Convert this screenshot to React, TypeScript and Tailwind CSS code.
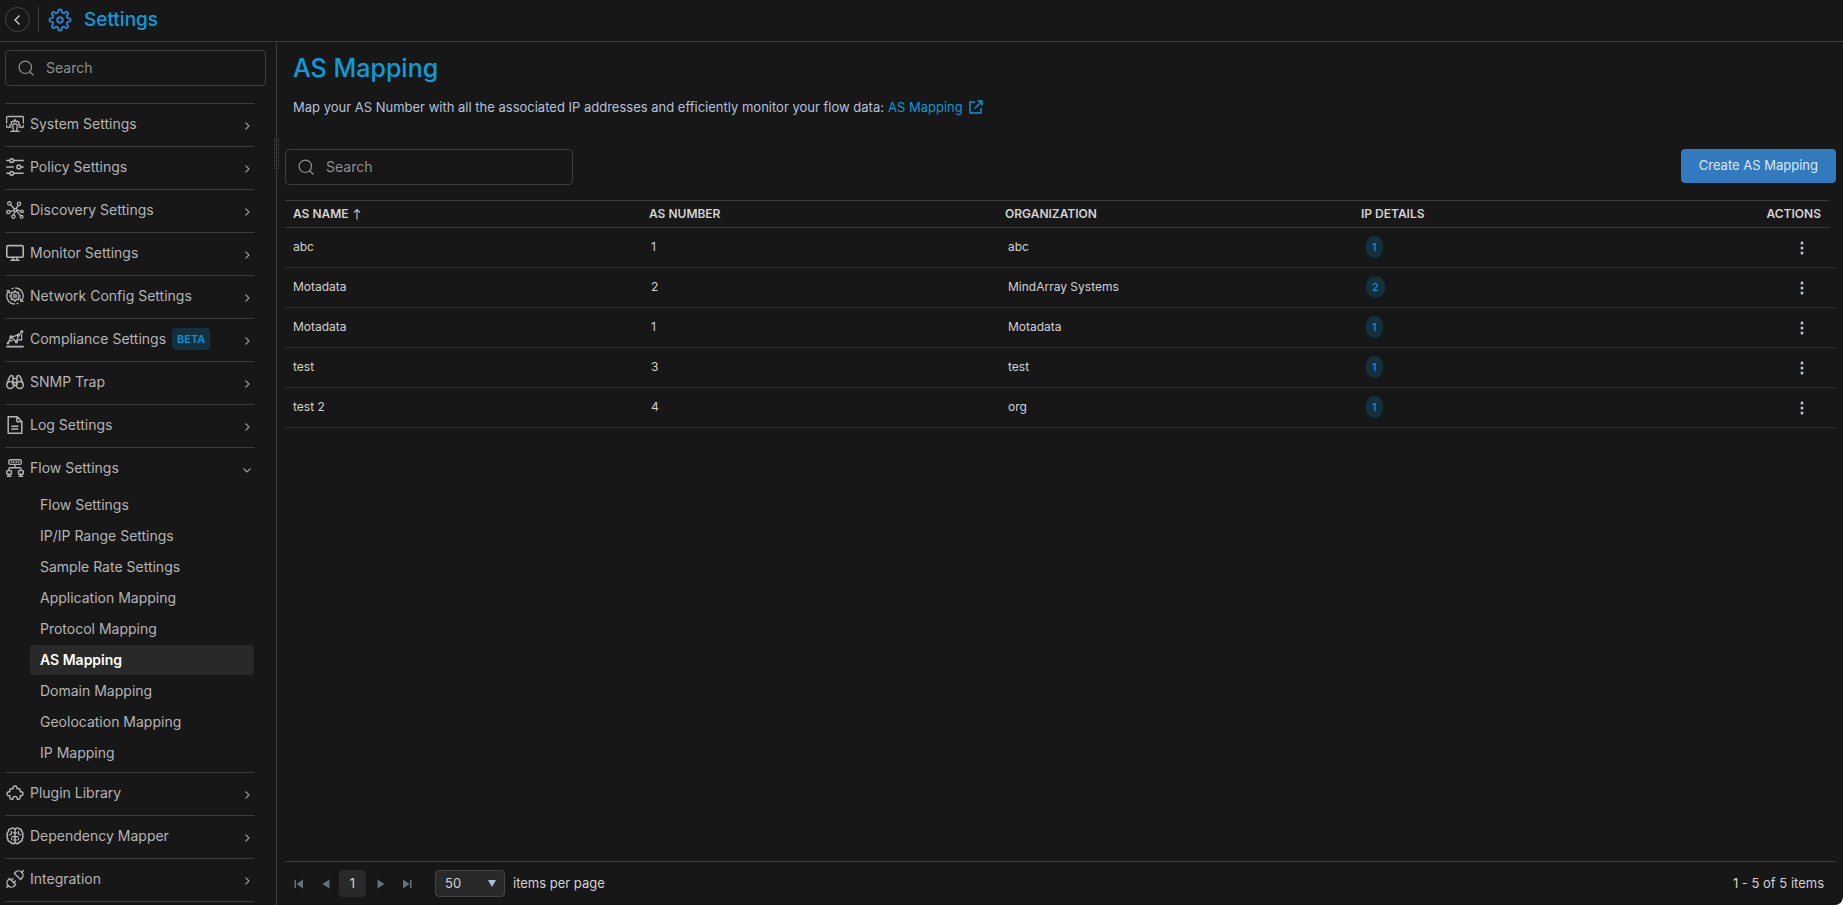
import { useState } from "react";
import type { ReactNode } from "react";

type Mapping = { id: number; name: string; asNumber: number; organization: string; ips: number };

const MAPPINGS: Mapping[] = [
    { id: 1, name: "abc", asNumber: 1, organization: "abc", ips: 1 },
    { id: 2, name: "Motadata", asNumber: 2, organization: "MindArray Systems", ips: 2 },
    { id: 3, name: "Motadata", asNumber: 1, organization: "Motadata", ips: 1 },
    { id: 4, name: "test", asNumber: 3, organization: "test", ips: 1 },
    { id: 5, name: "test 2", asNumber: 4, organization: "org", ips: 1 },
];

const FLOW_ITEMS: string[] = [
    "Flow Settings",
    "IP/IP Range Settings",
    "Sample Rate Settings",
    "Application Mapping",
    "Protocol Mapping",
    "AS Mapping",
    "Domain Mapping",
    "Geolocation Mapping",
    "IP Mapping",
];

// rounded gear outline, one lobe per tooth
const gearPath = (c: number, outer: number, inner: number, teeth: number) => {
    const step = (Math.PI * 2) / teeth;
    const at = (r: number, a: number) => `${(c + r * Math.cos(a)).toFixed(2)} ${(c + r * Math.sin(a)).toFixed(2)}`;
    let d = "";
    for (let i = 0; i < teeth; i++) {
        const a = i * step - Math.PI / 2;
        d += `${i === 0 ? "M" : "L"}${at(outer, a - step * 0.17)}Q${at(outer * 1.04, a)} ${at(outer, a + step * 0.17)}`;
        d += `L${at(inner * 1.04, a + step * 0.3)}Q${at(inner * 0.94, a + step * 0.5)} ${at(inner * 1.04, a + step * 0.7)}`;
    }
    return d + "Z";
};

const Icon = ({ children, width = 1.3 }: { children: ReactNode; width?: number }) => (
    <svg
        viewBox="0 0 18 18"
        className="size-[18px] shrink-0"
        fill="none"
        stroke="currentColor"
        strokeWidth={width}
        strokeLinecap="round"
        strokeLinejoin="round"
        aria-hidden="true"
    >
        {children}
    </svg>
);

const SystemIcon = () => (
    <Icon>
        <path d="M2.8 12.4H1.6a1 1 0 0 1-1-1v-1M.6 8V2.5a1 1 0 0 1 1-1h14.8a1 1 0 0 1 1 1V8M17.4 10.4v1a1 1 0 0 1-1 1h-1.2" />
        <path d="M5.2 12.2H3.8v-2l1.4-.5.3-.8-.6-1.3 1.4-1.4 1.3.6.6-.3.3-1.5h1l.3 1.5.6.3 1.3-.6 1.4 1.4-.6 1.3.3.8 1.4.5v2h-1.400" />
        <path d="M6.800 12V10.800a2.200 2.200 0 0 1 4.400 0V12M7.200 13v3.200h3.600V13M4.800 16.400h8.400" />
    </Icon>
);

const PolicyIcon = () => (
    <Icon width={1.5}>
        <path d="M.8 2.6h2.4M8.2 2.6h9M.8 9h6.400M15.4 9h1.8M.8 15.3h2.4M8.2 15.3h9" />
        <circle cx="5.7" cy="2.6" r="1.900" />
        <circle cx="12.8" cy="9" r="1.900" />
        <circle cx="5.7" cy="15.3" r="1.900" />
    </Icon>
);

const DiscoveryIcon = () => (
    <Icon>
        <circle cx="3.4" cy="2.4" r="1.7" />
        <circle cx="13" cy="2.8" r="1.7" />
        <circle cx="2.4" cy="11" r="1.7" />
        <circle cx="7.4" cy="15.6" r="1.7" />
        <circle cx="16" cy="10.4" r="1.3" />
        <circle cx="15.6" cy="15.8" r="1.4" />
        <circle cx="9.4" cy="9" r="1.5" />
        <path d="M4.6 3.7l3.6 4M12.2 4.4l-2 3.2M4.2 10.6l3.5-1M8.8 10.7l-1 3.2M11.2 9.2l3.4.9M10.7 10.2l3.9 4.6" />
    </Icon>
);

const MonitorIcon = () => (
    <Icon width={1.6}>
        <rect x=".8" y="1.600" width="16.4" height="11.6" rx="1.2" />
        <path d="M7 13.4v2.6M11 13.4v2.6M5 16.2h8" />
    </Icon>
);

const NetworkIcon = () => (
    <Icon>
        <path d={gearPath(9, 4.9, 3.6, 8)} />
        <circle cx="9" cy="9" r="1.4" />
        <path d="M8.400 17A8 8 0 0 1 2.2 4.600M9.600 1a8 8 0 0 1 6.200 12.400M.9 3.6l2.400.3.2 2.400M6 1.700l1-.4M17.100 14.400l-2.400-.3-.2-2.400M11 16.700l1-.4" />
    </Icon>
);

const ComplianceIcon = () => (
    <Icon>
        <path d="M1 16.6h16" strokeWidth="1.9" />
        <path d="M2.200 13l2.400-5.400M5.400 7.200l4.600 4.200M10.800 11.200l1.600-5.600M13 5.200l2.600-3.400M6 6.800l5.800-1.600M3.200 11.200l3-.6M12.400 9.800l3.200.2V4.400" />
        <circle cx="5" cy="7" r="1" />
        <circle cx="10.4" cy="11.8" r="1" />
        <circle cx="12.4" cy="5" r="1" />
        <circle cx="15.900" cy="1.600" r=".9" />
        <circle cx="2" cy="13.200" r=".7" />
    </Icon>
);

const BinocularsIcon = () => (
    <Icon width={1.5}>
        <circle cx="4.2" cy="11.9" r="3.5" />
        <circle cx="13.8" cy="11.9" r="3.5" />
        <path d="M1.4 9.6 3.8 3.6Q5.4 1.4 7 3.4v8M16.6 9.6l-2.4-6Q12.6 1.4 11 3.4v8M7 5.4h4M7.8 9.4h2.4M7.8 12.4h2.4" />
    </Icon>
);

const LogIcon = () => (
    <Icon width={1.5}>
        <path d="M2.2.8h9l4.6 4.8v11.6H2.2zM11 1v4.8h4.6M5.8 10.2h6M5.8 13h6" />
    </Icon>
);

const FlowIcon = () => (
    <Icon width={1.4}>
        <rect x="2.8" y=".8" width="12.4" height="4.6" rx="1.4" />
        <path d="M5.6 2.8v.6M7.8 2.8v.6M10.2 2.8v.6M12.4 2.8v.6M9 5.6v3.2M3 11.4V9.6q0-.8.8-.8h10.4q.8 0 .8.8v1.8" />
        <rect x=".7" y="11.6" width="4.8" height="3.6" rx=".6" />
        <rect x="12.5" y="11.6" width="4.8" height="3.6" rx=".6" />
        <path d="M3.1 15.4v1.8M1.4 17.3h3.6M14.9 15.4v1.8M13 17.3h3.6" />
    </Icon>
);

const PluginIcon = () => (
    <Icon width={1.4}>
        <path d="M7 4.800V4a2 2 0 0 1 4 0v.8h1.800q1.400 0 1.400 1.400v1.600h.8a2 2 0 0 1 0 4h-.8v2q0 1.400-1.400 1.400H11.200v-.6a2.200 2.200 0 0 0-4.400 0v.6H5.200q-1.400 0-1.400-1.400v-2H3a2 2 0 0 1 0-4h.8V6.200q0-1.400 1.400-1.400z" />
    </Icon>
);

const BrainIcon = () => (
    <Icon width={1.5}>
        <path d="M9 2.200Q7 0 5 1.800 2.400 1.800 2.400 4.400.6 6 1.400 8q-1 2 .4 3.800-.2 2.600 2.600 3.200Q6 17.600 9 16M9 2.200Q11 0 13 1.800q2.600 0 2.600 2.600Q17.400 6 16.600 8q1 2-.4 3.800.2 2.600-2.600 3.200Q12 17.600 9 16M9 2v14" />
        <path d="M5.400 4.400v2q0 1.400-2 1.400M12.600 4.400v2q0 1.400 2 1.400M6 9.600h6M5.600 12.800V11M12.400 12.800V11M7 5.800h4M7.400 13h3.200" strokeWidth="1.2" />
    </Icon>
);

const PlugIcon = () => (
    <Icon width={1.4}>
        <path d="M3.400 8.400l6.200 6.200-1.300 1.300a4.200 4.200 0 0 1-6-6.200zM14.600 9.600 8.400 3.400l1.300-1.300a4.200 4.200 0 0 1 6 6.200zM.7 17.300l1.800-1.800M17.300.7l-1.800 1.800M7 8.600 5.200 10.200M9.400 11 7.800 12.800" />
    </Icon>
);

const SearchIcon = () => (
    <svg viewBox="0 0 16 16" className="size-4 shrink-0 text-[#8a8f93]" fill="none" stroke="currentColor" strokeWidth="1.2" strokeLinecap="round" aria-hidden="true">
        <circle cx="7.3" cy="7.3" r="6.2" />
        <path d="M12 12l3 3" />
    </svg>
);

const Chevron = ({ down = false }: { down?: boolean }) => (
    <svg viewBox="0 0 8 8" className={`mt-1 size-2 shrink-0 text-[#9a9a9a] ${down ? "rotate-90" : ""}`} fill="none" stroke="currentColor" strokeWidth="1.1" aria-hidden="true">
        <path d="M2.5.5 6 4 2.5 7.5" />
    </svg>
);

const SECTIONS: { label: string; icon: ReactNode; beta?: boolean; items?: string[] }[] = [
    { label: "System Settings", icon: <SystemIcon /> },
    { label: "Policy Settings", icon: <PolicyIcon /> },
    { label: "Discovery Settings", icon: <DiscoveryIcon /> },
    { label: "Monitor Settings", icon: <MonitorIcon /> },
    { label: "Network Config Settings", icon: <NetworkIcon /> },
    { label: "Compliance Settings", icon: <ComplianceIcon />, beta: true },
    { label: "SNMP Trap", icon: <BinocularsIcon /> },
    { label: "Log Settings", icon: <LogIcon /> },
    { label: "Flow Settings", icon: <FlowIcon />, items: FLOW_ITEMS },
    { label: "Plugin Library", icon: <PluginIcon /> },
    { label: "Dependency Mapper", icon: <BrainIcon /> },
    { label: "Integration", icon: <PlugIcon /> },
];

const SearchBox = ({ label, value, onChange, className }: { label: string; value: string; onChange: (v: string) => void; className: string }) => (
    <label className={`flex h-9 items-center gap-3 rounded border border-[#3d3d3d] px-3 ${className}`}>
        <SearchIcon />
        <input
            type="text"
            aria-label={label}
            placeholder="Search"
            className="w-full min-w-0 bg-transparent pb-px text-sm text-[#c8c8c8] outline-none placeholder:text-[#8f8f8f]"
            value={value}
            onChange={e => onChange(e.target.value)}
        />
    </label>
);

const Header = () => (
    <header className="flex h-[42px] shrink-0 items-center border-b border-[#3d3d3d] pb-[2px] pl-[5px]">
        <button type="button" aria-label="Back" className="flex size-[25px] items-center justify-center rounded-full border border-[#454545] text-[#d0d0d0]">
            <svg viewBox="0 0 12 12" className="size-3" fill="none" stroke="currentColor" strokeWidth="1.3" aria-hidden="true">
                <path d="M7.5 1.5 3 6l4.5 4.5" />
            </svg>
        </button>
        <div className="ml-2 h-[25px] w-px bg-[#3d3d3d]" />
        <svg viewBox="0 0 24 24" className="ml-[9px] size-6 text-[#3279be]" fill="none" stroke="currentColor" strokeWidth="2" strokeLinejoin="round" aria-hidden="true">
            <path d={gearPath(12, 10.4, 7.7, 8)} />
            <circle cx="12" cy="12" r="2.8" />
        </svg>
        <span className="ml-3 text-[19px] leading-6 font-medium text-[#099dde]">Settings</span>
    </header>
);

const Sidebar = () => {
    const [query, setQuery] = useState("");
    const [open, setOpen] = useState("Flow Settings");
    const [active, setActive] = useState("AS Mapping");

    return (
        <aside className="relative w-[277px] shrink-0 border-r border-[#3d3d3d] pt-2 pl-[5px]">
            <SearchBox label="Search settings" value={query} onChange={setQuery} className="mr-[10px]" />
            <nav className="mt-[17px] mr-[22px] border-b border-[#3d3d3d]">
                {SECTIONS.map(section => (
                    <div key={section.label} className="border-t border-[#3d3d3d]">
                        <button
                            type="button"
                            className="flex h-[42px] w-full items-center pr-[3px] pb-[2px] pl-px text-sm text-[#b4b4b4]"
                            onClick={() => setOpen(open === section.label ? "" : section.label)}
                        >
                            {section.icon}
                            <span className="ml-[6px]">{section.label}</span>
                            {section.beta && (
                                <span className="ml-[6px] rounded bg-[#14303e] px-[5px] py-[3px] text-[11px] leading-4 font-semibold text-[#0a8fd4]">BETA</span>
                            )}
                            <span className="ml-auto">
                                <Chevron down={section.items !== undefined && open === section.label} />
                            </span>
                        </button>
                        {section.items && open === section.label && (
                            <ul className="flex flex-col gap-px pb-1 pl-[25px]">
                                {section.items.map(item => (
                                    <li key={item}>
                                        <a
                                            href="#"
                                            className={`block h-[30px] rounded px-[10px] text-sm leading-[29px] ${item === active ? "bg-[#292929] font-semibold text-white" : "text-[#b4b4b4]"}`}
                                            onClick={() => setActive(item)}
                                        >
                                            {item}
                                        </a>
                                    </li>
                                ))}
                            </ul>
                        )}
                    </div>
                ))}
            </nav>
            {/* resize grip over the divider */}
            <div className="absolute top-[97px] -right-[3px] h-[30px] w-[5px] border-x border-dotted border-[#4a4a4a]" />
        </aside>
    );
};

const MappingTable = ({ rows }: { rows: Mapping[] }) => (
    <table className="w-full table-fixed border-collapse text-left text-xs text-[#d2d2d2]">
        <colgroup>
            <col />
            <col />
            <col />
            <col />
            <col className="w-[120px]" />
            <col className="w-[7px]" />
        </colgroup>
        <thead>
            <tr className="h-[27px]">
                <th className="border-y border-[#3d3d3d] px-2 font-semibold">
                    <button type="button" className="flex items-center gap-1">
                        AS NAME
                        <svg viewBox="0 0 8 12" className="h-3 w-2 text-[#a9c0de]" fill="none" stroke="currentColor" strokeWidth="1.2" aria-hidden="true">
                            <path d="M4 11.5V1.5M1 4.5l3-3 3 3" />
                        </svg>
                    </button>
                </th>
                <th className="border-y border-[#3d3d3d] px-2 font-semibold">AS NUMBER</th>
                <th className="border-y border-[#3d3d3d] px-2 font-semibold">ORGANIZATION</th>
                <th className="border-y border-[#3d3d3d] px-2 font-semibold">IP DETAILS</th>
                <th className="border-y border-[#3d3d3d] px-2 text-right font-semibold">ACTIONS</th>
                <td />
            </tr>
        </thead>
        <tbody>
            {rows.map(row => (
                <tr key={row.id} className="h-10 border-b border-[#2b2b2b]">
                    <td className="px-2 pb-px">{row.name}</td>
                    <td className="pr-2 pb-px pl-[10px]">{row.asNumber}</td>
                    <td className="pr-2 pb-px pl-[11px]">{row.organization}</td>
                    <td className="pr-2 pb-px pl-[13px]">
                        <span className="inline-block rounded-full bg-[#15303d] px-[6px] text-[11px] leading-[22px] font-medium text-[#0a93db]">{row.ips}</span>
                    </td>
                    <td colSpan={2} className="pr-[30px] text-right">
                        <button type="button" aria-label={`Actions for ${row.name}`} className="align-middle text-[#b9c6da]">
                            <svg viewBox="0 0 8 16" className="h-4 w-2" fill="currentColor" aria-hidden="true">
                                <circle cx="4" cy="3" r="1.5" />
                                <circle cx="4" cy="8" r="1.5" />
                                <circle cx="4" cy="13" r="1.5" />
                            </svg>
                        </button>
                    </td>
                </tr>
            ))}
        </tbody>
    </table>
);

const PagerButton = ({ label, path }: { label: string; path: string }) => (
    <button type="button" aria-label={label} className="flex size-[27px] items-center justify-center text-[#66717e]">
        <svg viewBox="0 0 10 10" className="size-[10px]" fill="currentColor" aria-hidden="true">
            <path d={path} />
        </svg>
    </button>
);

const Pager = ({ total }: { total: number }) => (
    <footer className="mr-[7px] flex h-[44px] items-center border-t border-[#3d3d3d] pr-3 text-[13px] text-[#d2d2d2]">
        <PagerButton label="First page" path="M.5 1H2v8H.5zM9 .5v9L2.500 5z" />
        <PagerButton label="Previous page" path="M8.500.5v9L1.500 5z" />
        <button type="button" className="size-[27px] rounded-sm bg-[#292929]">1</button>
        <PagerButton label="Next page" path="M2.500.5v9l7-4.500z" />
        <PagerButton label="Last page" path="M1 .5v9L7.500 5zM8 1h1.500v8H8z" />
        <div className="relative ml-[15px]">
            <select aria-label="Items per page" defaultValue="50" className="h-[27px] w-[70px] appearance-none rounded border border-[#454545] bg-[#292929] pl-[9px] outline-none">
                <option>25</option>
                <option>50</option>
                <option>100</option>
            </select>
            <svg viewBox="0 0 8 7" className="pointer-events-none absolute top-[10px] right-[9px] h-[7px] w-2 text-[#a9bfdc]" fill="currentColor" aria-hidden="true">
                <path d="M0 0h8L4 7z" />
            </svg>
        </div>
        <span className="ml-2">items per page</span>
        <span className="ml-auto">1 - {total} of {total} items</span>
    </footer>
);

const App = () => {
    const [query, setQuery] = useState("");

    const rows = MAPPINGS.filter(row =>
        query ? `${row.name} ${row.organization}`.toLowerCase().includes(query.toLowerCase()) : true
    );

    return (
        <div className="flex h-screen flex-col overflow-hidden rounded-br-lg bg-[#171717] font-['Inter',sans-serif]">
            <Header />
            <div className="flex min-h-0 flex-1">
                <Sidebar />
                <main className="flex min-w-0 flex-1 flex-col pl-2">
                    <h1 className="mt-2 px-2 text-[25px] leading-9 font-medium text-[#099dde]">AS Mapping</h1>
                    <p className="mt-[9px] flex items-center px-2 text-[13px] leading-6 text-[#b3c0dc]">
                        <span>Map your AS Number with all the associated IP addresses and efficiently monitor your flow data:</span>
                        <a href="#" className="ml-1 flex items-center gap-[6px] text-[#0a98d8]">
                            AS Mapping
                            <svg viewBox="0 0 14 14" className="size-[14px]" fill="none" stroke="currentColor" strokeWidth="1.4" aria-hidden="true">
                                <path d="M6 2H1v11h11V8M8.500 1H13v4.500M13 1 5.500 8.500" />
                            </svg>
                        </a>
                    </p>
                    <div className="mt-[30px] mr-[7px] flex items-start justify-between">
                        <SearchBox label="Search mappings" value={query} onChange={setQuery} className="w-72" />
                        <button type="button" className="h-[34px] rounded bg-[#3279be] px-[18px] text-[13px] text-[#dce8f5]">Create AS Mapping</button>
                    </div>
                    <div className="mt-[15px] mr-[7px] min-h-0 flex-1">
                        <MappingTable rows={rows} />
                    </div>
                    <Pager total={rows.length} />
                </main>
            </div>
        </div>
    );
};

export default App;
